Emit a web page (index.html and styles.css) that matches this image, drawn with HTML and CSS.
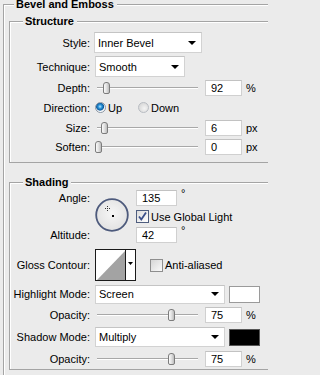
FILE: index.html
```html
<!DOCTYPE html>
<html>
<head>
<meta charset="utf-8">
<link rel="stylesheet" href="styles.css">
</head>
<body>
<div class="panel">
  <fieldset class="group outer">
    <legend>Bevel and Emboss</legend>

    <fieldset class="group sub structure">
      <legend>Structure</legend>
      <div class="row h21">
        <span class="lbl">Style:</span>
        <div class="select w-style"><span>Inner Bevel</span><i class="arrow"></i></div>
      </div>
      <div class="row h21 mt3">
        <span class="lbl">Technique:</span>
        <div class="select w-tech"><span>Smooth</span><i class="arrow"></i></div>
      </div>
      <div class="row h18 mt2">
        <span class="lbl">Depth:</span>
        <div class="slider"><span class="thumb" style="left:8px"></span></div>
        <div class="num">92</div><span class="unit">%</span>
      </div>
      <div class="row h21">
        <span class="lbl">Direction:</span>
        <span class="radio on"></span><span class="opt">Up</span>
        <span class="radio off"></span><span class="opt">Down</span>
      </div>
      <div class="row h19">
        <span class="lbl">Size:</span>
        <div class="slider"><span class="thumb" style="left:6px"></span></div>
        <div class="num">6</div><span class="unit">px</span>
      </div>
      <div class="row h20">
        <span class="lbl">Soften:</span>
        <div class="slider"><span class="thumb" style="left:0px"></span></div>
        <div class="num">0</div><span class="unit">px</span>
      </div>
    </fieldset>

    <fieldset class="group sub shading">
      <legend>Shading</legend>
      <div class="angle-grid">
        <span class="lbl a-lbl1">Angle:</span>
        <div class="dial">
          <svg width="34" height="34" viewBox="0 0 34 34">
            <defs>
              <radialGradient id="dg" cx="50%" cy="45%" r="55%">
                <stop offset="0" stop-color="#f6f6f6"/>
                <stop offset="1" stop-color="#e2e2e2"/>
              </radialGradient>
            </defs>
            <circle cx="17" cy="17" r="15.8" fill="url(#dg)" stroke="#4d5a7c" stroke-width="1.8"/>
            <path d="M10 10.5h1M12 10.5h1M14 10.5h1M12.5 8v1M12.5 12v1" stroke="#333" stroke-width="1"/>
            <rect x="17" y="17" width="2" height="2" fill="#000"/>
          </svg>
        </div>
        <div class="a-in1"><div class="num w-ang">135</div><span class="deg">°</span></div>
        <div class="a-chk">
          <span class="check on">
            <svg width="11" height="11" viewBox="0 0 11 11"><path d="M2 5.5l2.3 3L9 1.5" fill="none" stroke="#3a4f8a" stroke-width="1.8"/></svg>
          </span>
          <span class="opt">Use Global Light</span>
        </div>
        <span class="lbl a-lbl3">Altitude:</span>
        <div class="a-in3"><div class="num w-ang">42</div><span class="deg">°</span></div>
      </div>

      <div class="row h32 mt5">
        <span class="lbl">Gloss Contour:</span>
        <div class="contour">
          <svg width="41" height="32" viewBox="0 0 41 32">
            <rect x="0.5" y="0.5" width="40" height="31" fill="#fff" stroke="#1a1a1a"/>
            <polygon points="2,31 30,31 30,2" fill="#a3a3a3"/>
            <line x1="30.5" y1="1" x2="30.5" y2="31" stroke="#1a1a1a"/>
            <polygon points="33,13 38,13 35.5,16" fill="#000"/>
          </svg>
        </div>
        <span class="check off aa"></span>
        <span class="opt">Anti-aliased</span>
      </div>

      <div class="row h20 mt3">
        <span class="lbl">Highlight Mode:</span>
        <div class="select w-mode h19s"><span>Screen</span><i class="arrow"></i></div>
        <span class="swatch white"></span>
      </div>
      <div class="row h22">
        <span class="lbl">Opacity:</span>
        <div class="slider"><span class="thumb" style="left:73px"></span></div>
        <div class="num">75</div><span class="unit">%</span>
      </div>
      <div class="row h22">
        <span class="lbl">Shadow Mode:</span>
        <div class="select w-mode h20s"><span>Multiply</span><i class="arrow"></i></div>
        <span class="swatch black"></span>
      </div>
      <div class="row h21">
        <span class="lbl">Opacity:</span>
        <div class="slider"><span class="thumb" style="left:73px"></span></div>
        <div class="num">75</div><span class="unit">%</span>
      </div>
    </fieldset>
  </fieldset>
</div>
</body>
</html>
```

FILE: styles.css
```css
html, body {
  margin: 0;
  padding: 0;
  background: #ebebeb;
}
body {
  font-family: "Liberation Sans", Arial, sans-serif;
  font-size: 11px;
  color: #000;
}
.panel {
  box-sizing: border-box;
  width: 268px;
  height: 375px;
  overflow: hidden;
  padding-left: 3px;
}
.group {
  margin: 0;
  padding: 0;
  min-width: 0;
  border: 1px solid #a4a4a4;
  border-right: 0;
  box-shadow: inset 1px 1px 0 #fff;
}
.group > legend {
  font-weight: bold;
  line-height: 13px;
  height: 13px;
  padding: 0 3px 0 2px;
  background: #ebebeb;
}
.outer {
  margin-top: -2px;
  border-bottom: 0;
  padding-bottom: 10px;
}
.outer > legend {
  margin-left: 10px;
}
.sub {
  margin-left: 5px;
}
.sub > legend {
  margin-left: 13px;
}
.structure {
  margin-top: 4px;
  padding-top: 4px;
  padding-bottom: 5px;
}
.shading {
  margin-top: 13px;
  padding-bottom: 0;
}

.row {
  display: flex;
  align-items: center;
}
.h18 { height: 18px; }
.h19 { height: 19px; }
.h20 { height: 20px; }
.h21 { height: 21px; }
.h22 { height: 22px; }
.h32 { height: 32px; }
.mt2 { margin-top: 2px; }
.mt3 { margin-top: 3px; }
.mt5 { margin-top: 5px; }

.lbl {
  flex: none;
  width: 80px;
  margin-right: 5px;
  text-align: right;
  white-space: nowrap;
}

.select {
  flex: none;
  box-sizing: border-box;
  height: 21px;
  display: flex;
  align-items: center;
  background: #fff;
  border: 1px solid #d2d2d2;
  border-top-color: #c4c4c4;
  padding-left: 3px;
}
.select > span { white-space: nowrap; }
.w-style { width: 108px; margin-left: -1px; }
.w-tech { width: 90px; }
.w-mode { width: 130px; }
.h19s { height: 19px; }
.h20s { height: 20px; }
.arrow {
  margin-left: auto;
  margin-right: 5px;
  width: 0;
  height: 0;
  border-left: 4px solid transparent;
  border-right: 4px solid transparent;
  border-top: 4px solid #000;
}

.slider {
  flex: none;
  position: relative;
  width: 106px;
  height: 12px;
  margin-right: 4px;
  background:
    linear-gradient(#a8a8a8, #a8a8a8) no-repeat 2px 5px / 101px 1px,
    linear-gradient(#fff, #fff) no-repeat 2px 6px / 101px 1px;
}
.thumb {
  position: absolute;
  top: 0;
  width: 7px;
  height: 12px;
  box-sizing: border-box;
  border: 1px solid #7c7c7c;
  border-radius: 3px 3px 2px 2px;
  background: linear-gradient(90deg, #fafafa 0, #e4e4e4 45%, #bdbdbd 100%);
}

.num {
  flex: none;
  box-sizing: border-box;
  width: 37px;
  height: 16px;
  line-height: 14px;
  padding-left: 5px;
  background: #fff;
  border: 1px solid #d0d0d0;
  border-top-color: #c2c2c2;
}
.unit {
  margin-left: 4px;
}

.radio {
  flex: none;
  box-sizing: border-box;
  width: 11px;
  height: 11px;
  border-radius: 50%;
  border: 1px solid #8a96a4;
}
.radio.on {
  background: radial-gradient(circle at 45% 40%, #bfe8ff 0, #2f98dc 1.8px, #0b5b9e 3.6px, #dfe6ee 4.3px, #ffffff 5px);
}
.radio.off {
  margin-left: 16px;
  border-color: #b8bcc2;
  background: radial-gradient(circle at 60% 60%, #f4f4f4 0, #dcdcdc 5px);
}
.opt {
  margin-left: 2px;
  white-space: nowrap;
}

.angle-grid {
  display: grid;
  grid-template-columns: 85px 41px auto;
  grid-template-rows: 18px 19px 18px;
  align-items: center;
}
.a-lbl1 { grid-column: 1; grid-row: 1; }
.a-lbl3 { grid-column: 1; grid-row: 3; }
.dial {
  grid-column: 2;
  grid-row: 1 / 4;
  height: 34px;
  margin-top: -3px;
}
.dial svg { display: block; }
.a-in1, .a-in3 {
  grid-column: 3;
  display: flex;
  align-items: center;
}
.a-in1 { grid-row: 1; }
.a-in3 { grid-row: 3; }
.a-chk {
  grid-column: 3;
  grid-row: 2;
  display: flex;
  align-items: center;
}
.w-ang { width: 41px; }
.deg {
  margin-left: 4px;
  align-self: flex-start;
  margin-top: -3px;
  font-size: 11px;
}

.check {
  flex: none;
  box-sizing: border-box;
  width: 13px;
  height: 13px;
  border: 1px solid #4e5d7e;
  background: linear-gradient(135deg, #dcdcdc, #ffffff);
  display: flex;
  align-items: center;
  justify-content: center;
}
.check svg { display: block; }
.check.off {
  border-color: #8e8e8e;
  background: linear-gradient(135deg, #d6d6d6, #fafafa);
}
.aa {
  margin-left: 14px;
}

.contour {
  flex: none;
  width: 41px;
  height: 32px;
}
.contour svg { display: block; }

.swatch {
  flex: none;
  box-sizing: border-box;
  width: 31px;
  height: 17px;
  margin-left: 4px;
}
.swatch.white {
  background: #fff;
  border: 1px solid #9a9a9a;
}
.swatch.black {
  background: #000;
  border: 1px solid #555;
}
```
